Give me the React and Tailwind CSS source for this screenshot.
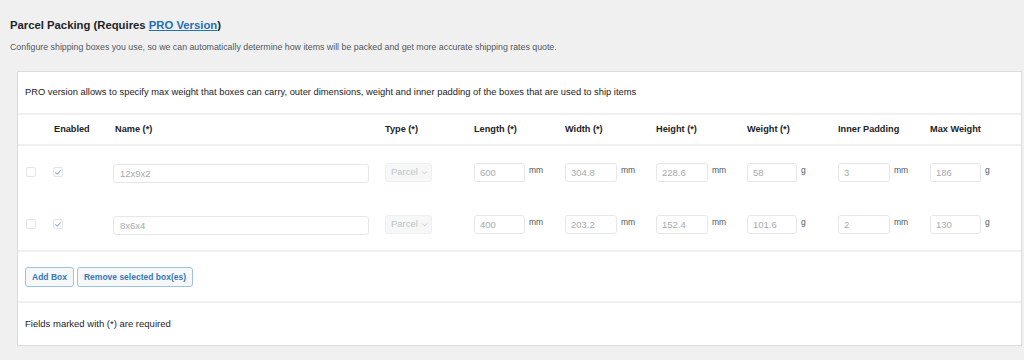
import React from "react";

const boxes = [
  { name: "12x9x2", length: "600", width: "304.8", height: "228.6", weight: "58", padding: "3", max: "186" },
  { name: "8x6x4", length: "400", width: "203.2", height: "152.4", weight: "101.6", padding: "2", max: "130" },
];

const cols = "grid grid-cols-[28px_67px_272px_89px_91px_91px_91px_91px_92px_91px]";

const UnitInput = ({ value, unit, width = "w-[51px]" }) => (
  <div className="flex items-start">
    <input
      readOnly
      value={value}
      className={`${width} h-[19px] rounded-[3px] border border-[#e6e7e8] bg-white px-[5px] text-[9.5px] text-[#a7aaad] outline-none`}
    />
    <span className="ml-[4px] mt-[1px] text-[8.5px] leading-[12px] text-[#50575e]">{unit}</span>
  </div>
);

const Checkbox = ({ checked }) => (
  <span className="flex h-[10px] w-[10px] items-center justify-center rounded-[2px] border border-[#e4e5e6] bg-white">
    {checked && (
      <svg viewBox="0 0 10 10" className="h-[9px] w-[9px]">
        <path d="M2 5.2 L4.1 7.2 L8 2.6" fill="none" stroke="#8db6e2" strokeWidth="1.3" strokeLinecap="round" strokeLinejoin="round" />
      </svg>
    )}
  </span>
);

const headers = [
  "",
  "Enabled",
  "Name (*)",
  "Type (*)",
  "Length (*)",
  "Width (*)",
  "Height (*)",
  "Weight (*)",
  "Inner Padding",
  "Max Weight",
];

export default function App() {
  return (
    <div className="min-h-[360px] w-[1024px] bg-[#f0f0f1] pt-[17px] font-['Liberation_Sans',Arial,sans-serif] text-[#3c434a]">
      <h3 className="pl-[10px] text-[11.3px] font-bold leading-[16px] text-[#1d2327]">
        Parcel Packing (Requires <a href="#" className="text-[#2271b1] underline">PRO Version</a>)
      </h3>
      <p className="mt-[8px] pl-[10px] text-[8.8px] leading-[12px] text-[#50575e]">
        Configure shipping boxes you use, so we can automatically determine how items will be packed and get more accurate shipping rates quote.
      </p>

      <div className="ml-[17px] mt-[18px] w-[1005px] border border-[#dcdcde] bg-white">
        <div className="flex h-[43px] items-center border-b-2 border-[#f0f0f1] pl-[7px] text-[9.35px] text-[#1d2327]">
          PRO version allows to specify max weight that boxes can carry, outer dimensions, weight and inner padding of the boxes that are used to ship items
        </div>

        <div className={`${cols} h-[31px] items-center border-b-2 border-[#f0f0f1] text-[9.2px] font-bold text-[#1d2327]`}>
          {headers.map((h, i) => (
            <div key={i} className={i === 1 ? "pl-[8px]" : i === 2 ? "pl-[2px]" : ""}>
              {h}
            </div>
          ))}
        </div>

        <div className="border-b-2 border-[#f0f0f1]">
          {boxes.map((b) => (
            <div key={b.name} className={`${cols} h-[52px] items-center`}>
              <div className="pl-[8px]">
                <Checkbox />
              </div>
              <div className="pl-[7px]">
                <Checkbox checked />
              </div>
              <div>
                <input
                  readOnly
                  value={b.name}
                  className="h-[19px] w-[256px] rounded-[3px] border border-[#e6e7e8] bg-white px-[6px] text-[9.5px] text-[#a7aaad] outline-none"
                />
              </div>
              <div>
                <div className="flex h-[19px] w-[47px] items-center gap-[3px] rounded-[3px] border border-[#f0f0f1] bg-[#f6f7f7] pl-[5px] text-[9.5px] text-[#c3c4c7]">
                  Parcel
                  <svg viewBox="0 0 10 10" className="h-[7px] w-[7px]">
                    <path d="M1.5 3.5 L5 7 L8.5 3.5" fill="none" stroke="#c3c4c7" strokeWidth="1.2" />
                  </svg>
                </div>
              </div>
              <UnitInput value={b.length} unit="mm" />
              <UnitInput value={b.width} unit="mm" width="w-[52px]" />
              <UnitInput value={b.height} unit="mm" width="w-[52px]" />
              <UnitInput value={b.weight} unit="g" width="w-[50px]" />
              <UnitInput value={b.padding} unit="mm" width="w-[52px]" />
              <UnitInput value={b.max} unit="g" />
            </div>
          ))}
        </div>

        <div className="flex h-[51px] items-start gap-[3px] border-b-2 border-[#f0f0f1] pl-[7px] pt-[15px]">
          <button className="h-[20px] rounded-[3px] border border-[#9fc1e4] bg-[#f6f7f7] px-[6px] text-[8.5px] font-bold text-[#3677b8]">
            Add Box
          </button>
          <button className="h-[20px] rounded-[3px] border border-[#9fc1e4] bg-[#f6f7f7] px-[6px] text-[8.5px] font-bold text-[#3677b8]">
            Remove selected box(es)
          </button>
        </div>

        <div className="flex h-[42px] items-center pl-[7px] text-[9.5px] text-[#1d2327]">
          Fields marked with (*) are required
        </div>
      </div>
    </div>
  );
}
